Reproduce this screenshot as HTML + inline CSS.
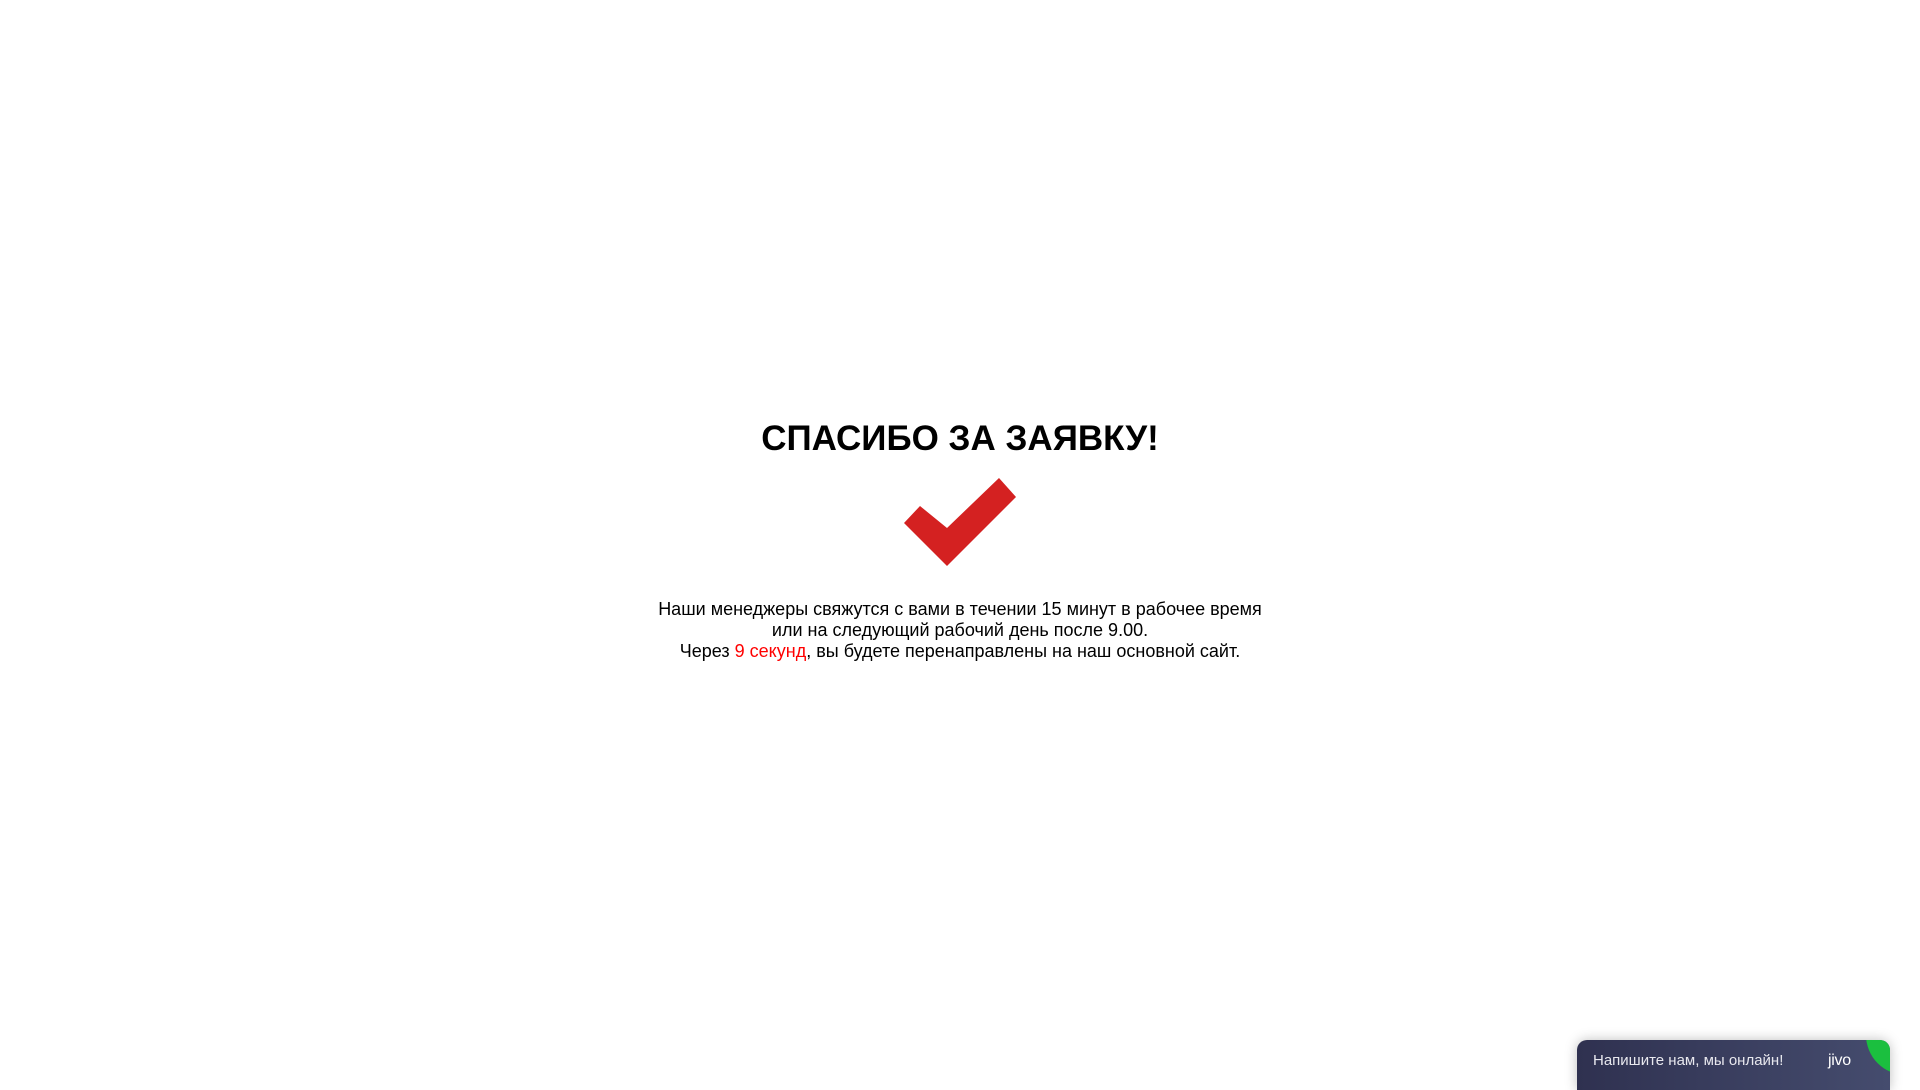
<!DOCTYPE html>
<html><head><meta charset="utf-8"><style>
html,body{margin:0;padding:0;width:1920px;height:1080px;background:#fff;overflow:hidden;font-family:"Liberation Sans",sans-serif;}
h1{position:absolute;left:0;width:1920px;top:419px;margin:0;text-align:center;font-size:35px;font-weight:bold;color:#000;line-height:40px;}
.chk{position:absolute;left:0;top:0;}
.txt{position:absolute;left:0;width:1920px;top:599px;text-align:center;font-size:18px;line-height:21px;color:#000;}
.red{color:#f00;}
.chat{position:absolute;left:1577px;top:1040px;width:313px;height:50px;border-radius:10px 10px 0 0;background:linear-gradient(90deg,#2f3150,#454c6e);box-shadow:0 0 12px rgba(0,0,0,.25);overflow:hidden;}
.chat span{position:absolute;left:16px;top:12px;color:#e8e8ee;font-size:15px;}
.jivo{position:absolute;left:251px;top:12px;color:#fff;font-size:16px;letter-spacing:-0.3px;}
.g{position:absolute;left:289px;top:-45px;width:80px;height:80px;border-radius:50%;background:#1bbf3f;}
</style></head><body>
<h1>СПАСИБО ЗА ЗАЯВКУ!</h1>
<svg class="chk" width="1920" height="1080"><polygon points="920,506 904,523 947,566 1016,497 999,478 947,528" fill="#d42121"/></svg>
<div class="txt">Наши менеджеры свяжутся с вами в течении 15 минут в рабочее время<br>или на следующий рабочий день после 9.00.<br>Через <span class="red">9 секунд</span>, вы будете перенаправлены на наш основной сайт.</div>
<div class="chat"><span>Напишите нам, мы онлайн!</span><div class="jivo">jivo</div><div class="g"></div></div>
</body></html>
